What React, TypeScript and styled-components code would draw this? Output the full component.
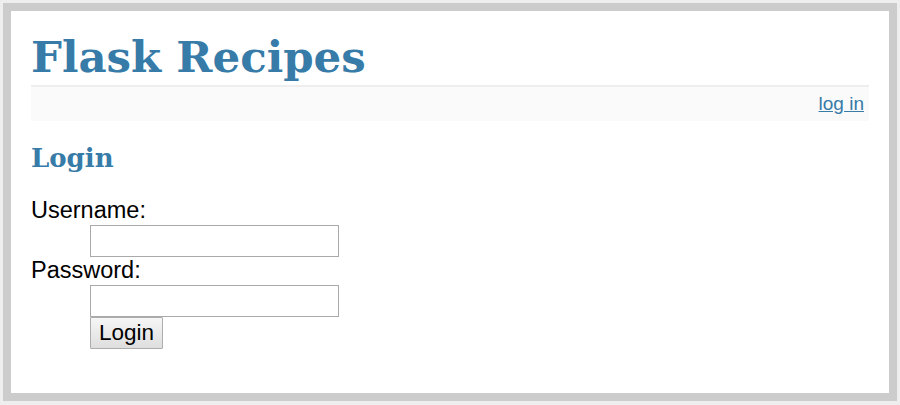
import React from "react";
import styled, { createGlobalStyle } from "styled-components";

const GlobalStyle = createGlobalStyle`
  body {
    margin: 0;
    background: #eee;
    font-family: "Liberation Sans", Arial, sans-serif;
  }
`;

const Page = styled.div`
  margin: 3px;
  border: 8px solid #ccc;
  background: #fff;
  padding: 0 20px 44px;
`;

const Title = styled.h1`
  margin: 0;
  padding-top: 17px;
  font-family: "DejaVu Serif", Georgia, serif;
  font-weight: bold;
  font-size: 43.5px;
  line-height: 57px;
  color: #377ba8;
  border-bottom: 2px solid #eee;
`;

const MetaNav = styled.div`
  display: flex;
  justify-content: flex-end;
  align-items: center;
  height: 34px;
  padding: 0 5px;
  margin-bottom: 17px;
  background: #fafafa;
  font-size: 19px;
`;

const NavLink = styled.a`
  color: #377ba8;
`;

const Heading = styled.h2`
  margin: 0 0 20px;
  font-family: "DejaVu Serif", Georgia, serif;
  font-weight: bold;
  font-size: 26px;
  line-height: 40px;
  color: #377ba8;
`;

const Form = styled.form`
  display: flex;
  flex-direction: column;
  align-items: flex-start;
`;

const Label = styled.label`
  font-size: 23.5px;
  line-height: 25px;
  color: #000;
`;

const Field = styled.div<{ gap?: number }>`
  padding-left: 59px;
  margin-top: 2px;
  margin-bottom: ${({ gap }) => gap ?? 0}px;
`;

const Input = styled.input`
  box-sizing: border-box;
  width: 249px;
  height: 32px;
  border: 1px solid #a9a9a9;
  background: #fff;
`;

const Button = styled.button`
  box-sizing: border-box;
  margin-left: 59px;
  width: 73px;
  height: 32px;
  border: 1px solid #adadad;
  border-radius: 1px;
  background: linear-gradient(#f6f6f6, #dedede);
  font-family: "Liberation Sans", Arial, sans-serif;
  font-size: 22.5px;
  color: #000;
  padding: 0;
`;

export default function App() {
  return (
    <>
      <GlobalStyle />
      <Page>
        <Title>Flask Recipes</Title>
        <MetaNav>
          <NavLink href="#">log in</NavLink>
        </MetaNav>
        <Heading>Login</Heading>
        <Form>
          <Label>Username:</Label>
          <Field gap={1}>
            <Input type="text" name="username" />
          </Field>
          <Label>Password:</Label>
          <Field>
            <Input type="password" name="password" />
          </Field>
          <Button type="submit">Login</Button>
        </Form>
      </Page>
    </>
  );
}
